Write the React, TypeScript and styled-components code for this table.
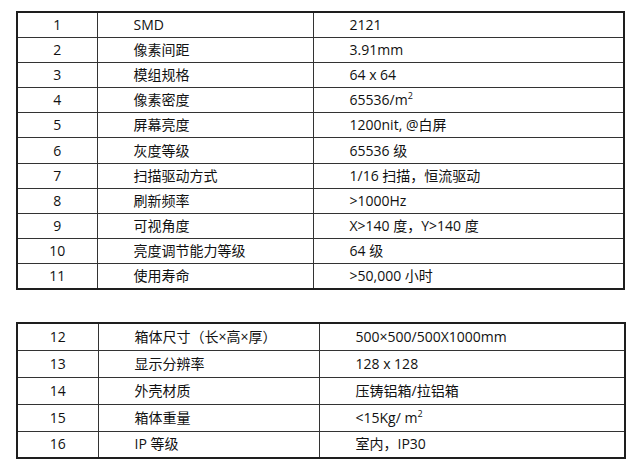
import styled, { createGlobalStyle } from "styled-components";
import { FC, ReactNode } from "react";

const GlobalStyle = createGlobalStyle`
  html, body {
    margin: 0;
    padding: 0;
    background: #ffffff;
  }
  body {
    font-family: "Open Sans", "Noto Sans CJK SC", sans-serif;
    color: #111111;
  }
`;

type Row = [string, ReactNode, ReactNode];

const mainRows: Row[] = [
  ["1", "SMD", "2121"],
  ["2", "像素间距", "3.91mm"],
  ["3", "模组规格", "64 x 64"],
  ["4", "像素密度", <>65536/m<sup>2</sup></>],
  ["5", "屏幕亮度", "1200nit, @白屏"],
  ["6", "灰度等级", "65536 级"],
  ["7", "扫描驱动方式", "1/16 扫描，恒流驱动"],
  ["8", "刷新频率", ">1000Hz"],
  ["9", "可视角度", "X>140 度，Y>140 度"],
  ["10", "亮度调节能力等级", "64 级"],
  ["11", "使用寿命", ">50,000 小时"],
];

const cabinetRows: Row[] = [
  ["12", "箱体尺寸（长×高×厚）", "500×500/500X1000mm"],
  ["13", "显示分辨率", "128 x 128"],
  ["14", "外壳材质", "压铸铝箱/拉铝箱"],
  ["15", "箱体重量", <>&lt;15Kg/ m<sup>2</sup></>],
  ["16", "IP 等级", "室内，IP30"],
];

const Page = styled.div`
  padding: 11px 9px 0 16px;
  display: flex;
  flex-direction: column;
  gap: 32px;
`;

const SpecTable = styled.table<{ $rowHeight: number; $width: number }>`
  width: ${(p) => p.$width}px;
  border-collapse: collapse;
  table-layout: fixed;
  border: 2px solid #1e1e1e;
  font-size: 14px;
  line-height: 18px;

  tr {
    height: ${(p) => p.$rowHeight}px;
  }

  sup {
    font-size: 9px;
    line-height: 0;
    vertical-align: 6px;
  }
`;

const Column = styled.col<{ $width?: number }>`
  width: ${(p) => (p.$width ? `${p.$width}px` : "auto")};
`;

const Cell = styled.td<{ $center?: boolean }>`
  border: 1px solid #333333;
  padding: 0 0 0 ${(p) => (p.$center ? 0 : 36)}px;
  text-align: ${(p) => (p.$center ? "center" : "left")};
  vertical-align: middle;
  white-space: nowrap;
`;

const SpecBlock: FC<{
  rows: Row[];
  rowHeight: number;
  width: number;
  cols: [number, number];
}> = ({ rows, rowHeight, width, cols }) => (
  <SpecTable $rowHeight={rowHeight} $width={width}>
    <colgroup>
      <Column $width={cols[0]} />
      <Column $width={cols[1]} />
      <Column />
    </colgroup>
    <tbody>
      {rows.map(([no, name, value]) => (
        <tr key={no}>
          <Cell $center>{no}</Cell>
          <Cell>{name}</Cell>
          <Cell>{value}</Cell>
        </tr>
      ))}
    </tbody>
  </SpecTable>
);

export default function App() {
  return (
    <>
      <GlobalStyle />
      <Page>
        <SpecBlock rows={mainRows} rowHeight={25.2} width={609} cols={[80, 216]} />
        <SpecBlock rows={cabinetRows} rowHeight={27} width={610} cols={[81, 221]} />
      </Page>
    </>
  );
}
